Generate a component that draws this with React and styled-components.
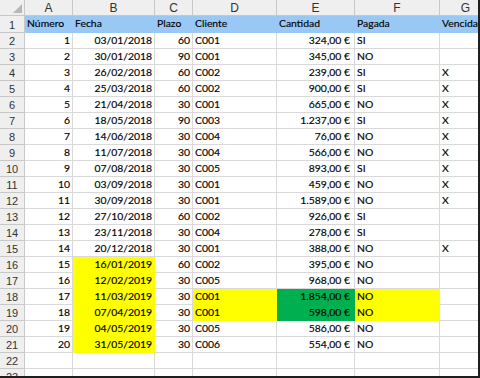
import React from 'react';
import styled, { createGlobalStyle } from 'styled-components';

const GlobalStyle = createGlobalStyle`
    html, body {
        margin: 0;
        padding: 0;
        background: #ffffff;
    }
`;

const GRID = '#d9d9d9';
const HEAD_LINE = '#c8c8c8';
const BLUE = '#9ac8f5';
const YELLOW = '#ffff00';
const GREEN = '#00b050';

const columns = ['A', 'B', 'C', 'D', 'E', 'F', 'G'];
const headings = ['Número', 'Fecha', 'Plazo', 'Cliente', 'Cantidad', 'Pagada', 'Vencida'];

const rows = [
    [1, '03/01/2018', 60, 'C001', '324,00 €', 'SI', ''],
    [2, '30/01/2018', 90, 'C001', '345,00 €', 'NO', ''],
    [3, '26/02/2018', 60, 'C002', '239,00 €', 'SI', 'X'],
    [4, '25/03/2018', 60, 'C002', '900,00 €', 'SI', 'X'],
    [5, '21/04/2018', 30, 'C001', '665,00 €', 'NO', 'X'],
    [6, '18/05/2018', 90, 'C003', '1.237,00 €', 'SI', 'X'],
    [7, '14/06/2018', 30, 'C004', '76,00 €', 'NO', 'X'],
    [8, '11/07/2018', 30, 'C004', '566,00 €', 'NO', 'X'],
    [9, '07/08/2018', 30, 'C005', '893,00 €', 'SI', 'X'],
    [10, '03/09/2018', 30, 'C001', '459,00 €', 'NO', 'X'],
    [11, '30/09/2018', 30, 'C001', '1.589,00 €', 'NO', 'X'],
    [12, '27/10/2018', 60, 'C002', '926,00 €', 'SI', ''],
    [13, '23/11/2018', 30, 'C004', '278,00 €', 'SI', ''],
    [14, '20/12/2018', 30, 'C001', '388,00 €', 'NO', 'X'],
    [15, '16/01/2019', 60, 'C002', '395,00 €', 'NO', ''],
    [16, '12/02/2019', 30, 'C005', '968,00 €', 'NO', ''],
    [17, '11/03/2019', 30, 'C001', '1.854,00 €', 'NO', ''],
    [18, '07/04/2019', 30, 'C001', '598,00 €', 'NO', ''],
    [19, '04/05/2019', 30, 'C005', '586,00 €', 'NO', ''],
    [20, '31/05/2019', 30, 'C006', '554,00 €', 'NO', ''],
];

// which columns hold numbers (right aligned)
const rightAligned = [true, true, true, false, true, false, false];

const fillFor = (num, col) => {
    if (col === 1 && num >= 15) return YELLOW;
    if (num === 17 || num === 18) {
        if (col === 3 || col === 5) return YELLOW;
        if (col === 4) return GREEN;
    }
    return null;
};

export default function App() {
    return (
        <>
            <GlobalStyle />
            <Sheet>
                <Grid>
                    <Corner>
                        <svg width="9" height="9" viewBox="0 0 9 9">
                            <polygon points="9,0 9,9 0,9" fill="#b7b7b7" />
                        </svg>
                    </Corner>
                    {columns.map((c) => (
                        <ColHeader key={c}>{c}</ColHeader>
                    ))}

                    <RowHeader>1</RowHeader>
                    {headings.map((h) => (
                        <Cell key={h} $fill={BLUE}>
                            {h}
                        </Cell>
                    ))}

                    {rows.map((row, i) => (
                        <React.Fragment key={i}>
                            <RowHeader>{i + 2}</RowHeader>
                            {row.map((v, col) => (
                                <Cell
                                    key={col}
                                    $right={rightAligned[col]}
                                    $currency={col === 4}
                                    $fill={fillFor(row[0], col)}
                                >
                                    {v}
                                </Cell>
                            ))}
                        </React.Fragment>
                    ))}

                    {[22, 23].map((n) => (
                        <React.Fragment key={n}>
                            <RowHeader>{n}</RowHeader>
                            {columns.map((c) => (
                                <Cell key={c} />
                            ))}
                        </React.Fragment>
                    ))}
                </Grid>
            </Sheet>
        </>
    );
}

const Sheet = styled.div`
    width: 478px;
    height: 376px;
    overflow: hidden;
    border-right: 2px solid #1e1e1e;
    border-bottom: 2px solid #1e1e1e;
    background: #ffffff;
`;

const Grid = styled.div`
    display: grid;
    grid-template-columns: 25px 48px 82px 38px 84px 78px 85px 52px;
    grid-template-rows: 16px 17px;
    grid-auto-rows: 16px;
    width: 492px;
`;

const HeaderBase = styled.div`
    box-sizing: border-box;
    background: #efefef;
    border-right: 1px solid ${HEAD_LINE};
    border-bottom: 1px solid ${HEAD_LINE};
    color: #333333;
    font-family: 'Liberation Sans', Arial, sans-serif;
    display: flex;
    align-items: center;
    justify-content: center;
`;

const Corner = styled(HeaderBase)`
    align-items: flex-end;
    justify-content: flex-end;
    padding: 0 2px 2px 0;
`;

const ColHeader = styled(HeaderBase)`
    font-size: 12px;
`;

const RowHeader = styled(HeaderBase)`
    font-size: 11px;
    padding-top: 1px;
`;

const Cell = styled.div`
    box-sizing: border-box;
    background: ${(p) => p.$fill || '#ffffff'};
    border-right: 1px solid ${(p) => p.$fill || GRID};
    border-bottom: 1px solid ${(p) => p.$fill || GRID};
    font-family: Lato, 'Liberation Sans', sans-serif;
    font-size: 10.4px;
    line-height: 15px;
    color: #000000;
    -webkit-text-stroke: 0.15px #000000;
    white-space: nowrap;
    overflow: visible;
    text-align: ${(p) => (p.$right ? 'right' : 'left')};
    padding: 0 ${(p) => (p.$currency ? '4px' : '2px')} 0 2px;
`;
